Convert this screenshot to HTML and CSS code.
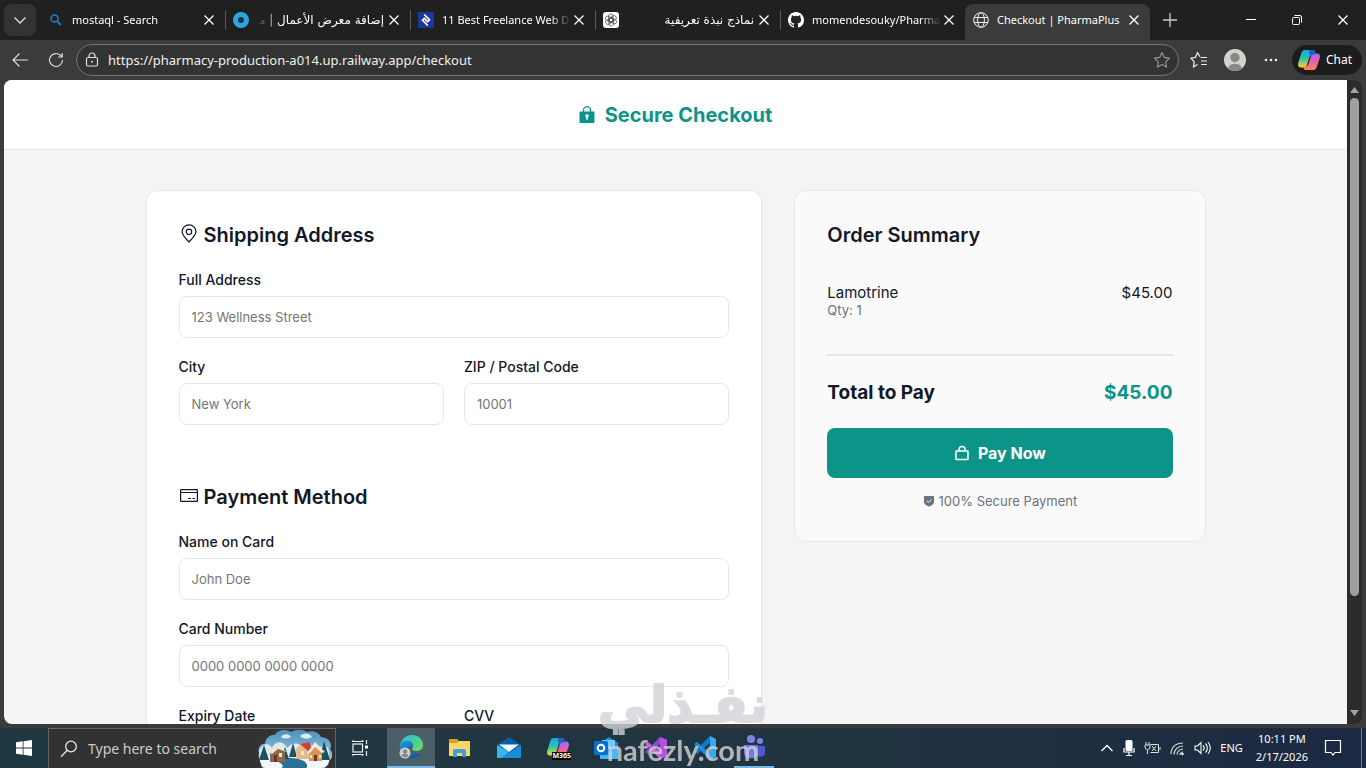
FILE: index.html
```html
<!DOCTYPE html>
<html lang="en">
<head>
<meta charset="utf-8">
<title>Checkout | PharmaPlus</title>
<link rel="stylesheet" href="styles.css">
</head>
<body>
<svg class="defs" aria-hidden="true">
  <defs>
    <linearGradient id="cpA" x1="0" y1="0" x2="0" y2="1"><stop offset="0" stop-color="#19a5f5"/><stop offset=".5" stop-color="#2fc6a0"/><stop offset="1" stop-color="#ffd02f"/></linearGradient>
    <linearGradient id="cpB" x1="0" y1="0" x2="0" y2="1"><stop offset="0" stop-color="#9a6bf5"/><stop offset=".5" stop-color="#ee5fa8"/><stop offset="1" stop-color="#ff8a4a"/></linearGradient>
    <linearGradient id="edgeA" x1="0" y1="0" x2="1" y2="1"><stop offset="0" stop-color="#2bb5ee"/><stop offset="1" stop-color="#6fe04a"/></linearGradient>
    <linearGradient id="edgeB" x1="0" y1="0" x2="1" y2="1"><stop offset="0" stop-color="#1b9de2"/><stop offset="1" stop-color="#0c4a9e"/></linearGradient>
    <linearGradient id="sky" x1="0" y1="0" x2="0" y2="1"><stop offset="0" stop-color="#4a90bd"/><stop offset="1" stop-color="#b7d8ea"/></linearGradient>
    <symbol id="x" viewBox="0 0 12 12"><path d="M1.5 1.5l9 9M10.500 1.500l-9 9" fill="none" stroke="currentColor" stroke-width="1.300"/></symbol>
    <symbol id="copilot" viewBox="0 0 24 24">
      <path d="M8 2h8c1 0 1.500.5 2 1.500l1 3h-3c-2 0-3 1-3.500 2.500L10 17c-.6 1.700-1.600 2.500-3.500 2.500H4C1.500 19.500.5 17.500 1.200 15L4.500 4.500C5 3 6 2 8 2z" fill="url(#cpA)"/>
      <path d="M16 22H8.500C7 22 6.500 20.500 6 18.500h2c2 0 3-1 3.500-2.500L14 8c.6-1.700 1.600-2.500 3.500-2.500H20c2.500 0 3.500 2 2.800 4.500L19.500 19.500C19 21 18 22 16 22z" fill="url(#cpB)"/>
      <path d="M12 2h4c1 0 1.500.5 2 1.500l1 3h-2.500c-1.800 0-2.600.8-3.200 2L12 5z" fill="#1b5fd0"/>
    </symbol>
  </defs>
</svg>

<div class="tabstrip">
  <button class="tabmenu" aria-label="Tab actions"><svg width="14" height="14" viewBox="0 0 14 14"><path d="M1.500 4.500L7 10l5.500-5.500" fill="none" stroke="#ddd" stroke-width="1.300"/></svg></button>
  <div class="tabs">
    <div class="tab">
      <svg class="fav" viewBox="0 0 16 16"><circle cx="6.500" cy="6.500" r="3.500" fill="none" stroke="#2678c0" stroke-width="1.600"/><path d="M9 9l4 4" stroke="#2678c0" stroke-width="1.800"/></svg>
      <span class="title">mostaql - Search</span>
      <button class="close" aria-label="Close tab"><svg><use href="#x"/></svg></button>
    </div>
    <div class="tab sep">
      <svg class="fav" viewBox="0 0 16 16"><circle cx="8" cy="8" r="5.500" fill="#173445" stroke="#2da5e0" stroke-width="5"/></svg>
      <span class="title rtl" dir="rtl" lang="ar">إضافة معرض الأعمال | مستقل</span>
      <button class="close" aria-label="Close tab"><svg><use href="#x"/></svg></button>
    </div>
    <div class="tab sep">
      <svg class="fav" viewBox="0 0 16 16"><path fill="#183a9e" d="M0 0h16v16H0z"/><path d="M6.200 2.500l5.300 5.300-2.300 2.400M9.800 13.500L4.500 8.200l2.300-2.400M6.200 6l3.600 4" fill="none" stroke="#fff" stroke-width="1.700"/></svg>
      <span class="title">11 Best Freelance Web D</span>
      <button class="close" aria-label="Close tab"><svg><use href="#x"/></svg></button>
    </div>
    <div class="tab sep">
      <svg class="fav" viewBox="0 0 16 16"><rect width="16" height="16" rx="3" fill="#fff"/><g fill="none" stroke="#444" stroke-width=".7"><rect x="5.500" y="2" width="4.500" height="8" rx="2.200"/><rect x="5.500" y="2" width="4.500" height="8" rx="2.200" transform="rotate(60 8 8)"/><rect x="5.500" y="2" width="4.500" height="8" rx="2.200" transform="rotate(120 8 8)"/><rect x="5.500" y="2" width="4.500" height="8" rx="2.200" transform="rotate(180 8 8)"/><rect x="5.500" y="2" width="4.500" height="8" rx="2.200" transform="rotate(240 8 8)"/><rect x="5.500" y="2" width="4.500" height="8" rx="2.200" transform="rotate(300 8 8)"/></g></svg>
      <span class="title rtl" dir="rtl" lang="ar">نماذج نبذة تعريفية</span>
      <button class="close" aria-label="Close tab"><svg><use href="#x"/></svg></button>
    </div>
    <div class="tab sep">
      <svg class="fav" viewBox="0 0 16 16"><path fill="#fff" d="M8 0C3.580 0 0 3.580 0 8c0 3.540 2.290 6.530 5.470 7.590.4.070.55-.17.55-.38 0-.19-.01-.82-.01-1.490-2.010.37-2.530-.49-2.690-.94-.09-.23-.48-.94-.82-1.130-.28-.15-.68-.52-.01-.53.63-.01 1.080.58 1.230.82.720 1.210 1.870.87 2.330.66.070-.52.280-.87.510-1.070-1.780-.2-3.640-.89-3.640-3.950 0-.87.310-1.590.82-2.150-.08-.2-.36-1.020.08-2.120 0 0 .67-.21 2.200.82a7.600 7.600 0 014 0c1.530-1.040 2.200-.82 2.200-.82.440 1.100.16 1.920.08 2.120.51.560.82 1.270.82 2.150 0 3.070-1.870 3.750-3.650 3.950.29.250.54.730.54 1.480 0 1.070-.01 1.930-.01 2.200 0 .21.150.46.55.38A8 8 0 0016 8c0-4.420-3.580-8-8-8z"/></svg>
      <span class="title">momendesouky/Pharma</span>
      <button class="close" aria-label="Close tab"><svg><use href="#x"/></svg></button>
    </div>
    <div class="tab active">
      <svg class="fav" viewBox="0 0 16 16"><g fill="none" stroke="#eee" stroke-width="1"><circle cx="8" cy="8" r="7.300"/><ellipse cx="8" cy="8" rx="3.400" ry="7.300"/><path d="M1.200 5.500h13.600M1.200 10.500h13.600"/></g></svg>
      <span class="title">Checkout | PharmaPlus</span>
      <button class="close" aria-label="Close tab"><svg><use href="#x"/></svg></button>
    </div>
    <button class="newtab" aria-label="New tab"><svg width="16" height="16" viewBox="0 0 16 16"><path d="M8 1v14M1 8h14" stroke="#ccc" stroke-width="1.300"/></svg></button>
  </div>
  <div class="wincontrols">
    <button aria-label="Minimize"><svg width="12" height="12" viewBox="0 0 12 12"><path d="M1 5.500h10" stroke="#fff"/></svg></button>
    <button aria-label="Restore"><svg width="12" height="12" viewBox="0 0 12 12"><g fill="none" stroke="#fff"><rect x="1.500" y="3.500" width="7" height="7" rx="1"/><path d="M3.500 1.500h5.500a1.500 1.500 0 011.500 1.500v5.500"/></g></svg></button>
    <button aria-label="Close"><svg width="12" height="12"><use href="#x"/></svg></button>
  </div>
</div>

<div class="toolbar">
  <button class="tool" aria-label="Back"><svg width="18" height="16" viewBox="0 0 18 16"><path d="M17 8H2M8.500 1.500L2 8l6.500 6.500" fill="none" stroke="#ddd" stroke-width="1.200"/></svg></button>
  <button class="tool" aria-label="Refresh"><svg width="16" height="16" viewBox="0 0 16 16"><path d="M14.500 8A6.500 6.500 0 1112.500 3.300L14 4.800M14.200 1v4h-4" fill="none" stroke="#ddd" stroke-width="1.200"/></svg></button>
  <div class="address">
    <svg width="14" height="16" viewBox="0 0 14 16"><g fill="none" stroke="#ddd" stroke-width="1.200"><rect x="1.500" y="5.500" width="11" height="8.500" rx="1.500"/><path d="M4 5.500V4a3 3 0 016 0v1.500"/></g><circle cx="7" cy="9.800" r="1" fill="#ddd"/></svg>
    <input type="text" aria-label="Address" value="https://pharmacy-production-a014.up.railway.app/checkout">
    <button aria-label="Add to favorites"><svg width="18" height="18" viewBox="0 0 18 18"><path d="M9 1.500l2.300 4.900 5.200.7-3.800 3.700.9 5.300L9 13.600l-4.600 2.500.9-5.300L1.500 7.100l5.200-.7z" fill="none" stroke="#999" stroke-width="1.100" stroke-linejoin="round"/></svg></button>
  </div>
  <button class="tool" aria-label="Favorites"><svg width="18" height="18" viewBox="0 0 18 18"><path d="M10 5.800L7.500 1.500 5.400 6.400.9 7.100l3.300 3.700-.8 5.300L7.500 13.600M10.500 6.500H17M11 10h6M11 13.500h6" fill="none" stroke="#eee" stroke-width="1.200" stroke-linejoin="round"/></svg></button>
  <button class="tool" aria-label="Profile"><svg width="22" height="22" viewBox="0 0 22 22"><circle cx="11" cy="11" r="11" fill="#d4d2cf"/><circle cx="11" cy="8.500" r="4.700" fill="#8b8986"/><path d="M4 19.500c.5-3 3-4.700 7-4.700s6.500 1.700 7 4.700a11 11 0 01-14 0z" fill="#8b8986"/></svg></button>
  <button class="tool" aria-label="Settings and more"><svg width="14" height="4" viewBox="0 0 14 4"><g fill="#eee"><circle cx="2" cy="2" r="1.300"/><circle cx="7" cy="2" r="1.300"/><circle cx="12" cy="2" r="1.300"/></g></svg></button>
  <button class="chat"><svg width="24" height="24"><use href="#copilot"/></svg>Chat</button>
</div>

<div class="viewport">
  <div class="page">
    <header class="site-header">
      <svg width="16" height="18" viewBox="0 0 16 18"><path d="M4.500 6V4.200a3.500 3.500 0 017 0V6" fill="none" stroke="#0d9488" stroke-width="1.300"/><path fill="#0d9488" fill-rule="evenodd" d="M1.500 5.500h13a1 1 0 011 1V16a1 1 0 01-1 1h-13a1 1 0 01-1-1V6.500a1 1 0 011-1zM8 8.200a1.800 1.800 0 00-.8 3.400v2.200h1.600v-2.200A1.800 1.800 0 008 8.200z"/></svg>
      <h1>Secure Checkout</h1>
    </header>
    <main class="checkout">
      <form class="card details">
        <section>
          <h2><svg width="20" height="22" viewBox="0 0 20 22"><g fill="none" stroke="#111827" stroke-width="1.200"><path d="M10 18C6 14 3.100 11 3.100 7.800a6.900 6.900 0 0113.800 0c0 3.200-2.900 6.200-6.900 10.200z"/><circle cx="10" cy="7.800" r="2.700"/></g></svg>Shipping Address</h2>
          <div class="field"><label for="addr">Full Address</label><input id="addr" type="text" placeholder="123 Wellness Street"></div>
          <div class="pair">
            <div class="field"><label for="city">City</label><input id="city" type="text" placeholder="New York"></div>
            <div class="field"><label for="zip">ZIP / Postal Code</label><input id="zip" type="text" placeholder="10001"></div>
          </div>
        </section>
        <section>
          <h2><svg width="20" height="22" viewBox="0 0 20 22"><g fill="none" stroke="#111827" stroke-width="1.200"><rect x="1.600" y="3.600" width="16.800" height="11.800" rx=".5"/><path d="M1.500 6.500h17M9 12.500h3M13.500 12.500h2.500"/></g></svg>Payment Method</h2>
          <div class="field"><label for="name">Name on Card</label><input id="name" type="text" placeholder="John Doe"></div>
          <div class="field"><label for="card">Card Number</label><input id="card" type="text" placeholder="0000 0000 0000 0000"></div>
          <div class="pair">
            <div class="field"><label for="exp">Expiry Date</label><input id="exp" type="text" placeholder="MM/YY"></div>
            <div class="field"><label for="cvv">CVV</label><input id="cvv" type="text" placeholder="123"></div>
          </div>
        </section>
      </form>
      <aside class="card summary">
        <h2>Order Summary</h2>
        <div class="item">
          <div><div>Lamotrine</div><div class="qty">Qty: 1</div></div>
          <div>$45.00</div>
        </div>
        <div class="total"><span>Total to Pay</span><span class="amount">$45.00</span></div>
        <button class="pay"><svg width="16" height="16" viewBox="0 0 16 16"><g fill="none" stroke="#fff" stroke-width="1.500"><rect x="2" y="6" width="12" height="8.500" rx=".5"/><path d="M5 6V4.500a3 3 0 016 0V6"/></g></svg>Pay Now</button>
        <p class="secure"><svg width="12" height="12" viewBox="0 0 12 12"><path d="M1 1h10v5.500C11 9 8.500 11 6 11.500 3.500 11 1 9 1 6.500z" fill="#6b7280"/><path d="M3.700 5.800l1.700 1.700 3-3" fill="none" stroke="#fafafa"/></svg>100% Secure Payment</p>
      </aside>
    </main>
  </div>
  <div class="scrollbar">
    <svg width="9" height="6" viewBox="0 0 9 6"><path d="M4.500 0L9 6H0z" fill="#a5a5a5"/></svg>
    <div class="track"><div class="thumb"></div></div>
    <svg width="9" height="6" viewBox="0 0 9 6"><path d="M4.500 6L0 0h9z" fill="#a5a5a5"/></svg>
  </div>
</div>

<footer class="taskbar">
  <button class="start" aria-label="Start"><svg width="16" height="16" viewBox="0 0 16 16"><path d="M0 2.200L6.700 1.300v6.300H0zM7.500 1.200L16 0v7.600H7.500zM0 8.400h6.700v6.300L0 13.800zM7.500 8.400H16V16l-8.500-1.200z" fill="#fff"/></svg></button>
  <div class="search">
    <svg width="18" height="18" viewBox="0 0 18 18"><circle cx="11" cy="6.500" r="5.300" fill="none" stroke="#e5e5e5" stroke-width="1.300"/><path d="M7.200 10.300L1 16.800" stroke="#e5e5e5" stroke-width="1.300"/></svg>
    <input type="text" aria-label="Search" placeholder="Type here to search">
    <svg width="74" height="40" viewBox="0 0 74 40">
      <path d="M1 24c-2-6 3-10 6-9 0-6 6-10 10-9 3-6 12-6 16-3 5-3 12-3 16 0 7-2 12 1 14 5 7 0 12 6 9 12 4 5 2 10-1 12 0 5-5 8-9 8H10c-7 0-8-5-6-8-3-1-4-5-3-8z" fill="url(#sky)"/>
      <path d="M1 22c5-10 11-7 13-3 4-8 12-7 15 0 6-7 14-5 16 1 6-6 12-4 15 0 5-6 11-3 11 3v10H2z" fill="#d9eaf3"/>
      <path d="M42 7c4-4 10-3 12 1-5 3-9 2-12-1zM23 8c3-4 8-3 10 0-4 2-7 2-10 0z" fill="#dcecf4"/>
      <path d="M2 30c8-5 16-3 22-1 8 3 14-3 24-1 10-2 18-1 23 3 0 5-5 8-9 8H10c-6 0-8-4-8-9z" fill="#f1f7fa"/>
      <path d="M18 32c8-4 20-4 28 0 3 2 4 5 2 8H22c5-3 3-5-4-8z" fill="#2d6f96"/>
      <path d="M6 16l-5 15h10zM27 18l-4 12h8zM35 14l-4 14h8zM66 12l-5 19h11z" fill="#1c5361"/>
      <path d="M12 22l6-6 9 6v11H12z" fill="#8e6550"/><path d="M10 23l8-8 3 2 8 6-9-3-6 5z" fill="#eee3d5"/>
      <path d="M38 20l6-6 8 7v9H38z" fill="#e5b98d"/><path d="M42 15l9-2 4 8-5 1z" fill="#ca4434"/>
      <path d="M51 23l6-8 7 8v9H51z" fill="#d99357"/><path d="M49 24l8-11 10 10-3 1-7-6-6 7z" fill="#f4e9dc"/>
      <path d="M16 26h3v7h-3zM56 26h3v6h-3z" fill="#6d3521"/><path d="M21 24h3v4h-3zM43 22h3v4h-3zM52 26h2v3h-2zM61 26h2v3h-2z" fill="#ffe9a0"/>
    </svg>
  </div>
  <button class="task" aria-label="Task view"><svg width="18" height="18" viewBox="0 0 18 18"><g fill="none" stroke="#eee" stroke-width="1.200"><rect x="2" y="5" width="9.500" height="8"/><path d="M1 2.500h11.500M1 15.500h11.500M15.500 1v4M15.500 12v5M2 2.500V1M11.500 2.500V1M2 15.500V17M11.500 15.500V17"/></g><path d="M14 6.500h3v3h-3z" fill="#fff"/></svg></button>
  <div class="apps">
    <button class="task current" aria-label="Microsoft Edge"><svg width="26" height="26" viewBox="0 0 26 26"><path d="M2 12C3 4 9 1 14 1c7 0 11 5 11 10 0 4-3 6-7 6-3 0-4-1-4-2 0-1 1-1 1-3 0-3-3-5-6-5-4 0-6 3-7 5z" fill="url(#edgeA)"/><path d="M2 12c1-3 4-5 7-5 4 0 6 2 6 5-1-1-5 0-5 4 0 4 5 6 12 3-2 4-6 6-10 5C5 23 1 18 2 12z" fill="url(#edgeB)"/><circle cx="7" cy="19" r="5.500" fill="#cfcfcf"/><circle cx="7" cy="17.500" r="2.200" fill="#888"/><path d="M3.500 22c.7-3 6.300-3 7 0a5 5 0 01-7 0z" fill="#888"/></svg></button>
    <button class="task" aria-label="File Explorer"><svg width="24" height="22" viewBox="0 0 24 22"><path d="M1 2h8l2 2h11v15H1z" fill="#d9a02b"/><path d="M1 6h8l2-2h11v15H1z" fill="#fbd767"/><path d="M5 20v-6a2 2 0 012-2h9a2 2 0 012 2v6h-4v-4H9v4z" fill="#3f9fd8"/></svg></button>
    <button class="task" aria-label="Mail"><svg width="26" height="24" viewBox="0 0 26 24"><path d="M1 9L13 1l12 8v13H1z" fill="#0b5cab"/><path d="M3 8.500h20L13 16z" fill="#f4fbff"/><path d="M1 9l12 7-7 6H1z" fill="#38b5ec"/><path d="M25 9v13H5z" fill="#168dd8"/></svg></button>
    <button class="task m365" aria-label="Microsoft 365"><svg width="26" height="24"><use href="#copilot"/></svg><span>M365</span></button>
    <button class="task" aria-label="Outlook"><svg width="26" height="24" viewBox="0 0 26 24"><path d="M6 7l9-6 9 6v14H6z" fill="#1a8ee0"/><path d="M8 4h13v9H8z" fill="#72caff"/><path d="M6 11l9 6 9-6v12H6z" fill="#45b8f5"/><rect y="5" width="14" height="14" rx="1.500" fill="#0b6fd0"/><circle cx="7" cy="12" r="3.300" fill="none" stroke="#fff" stroke-width="2"/></svg></button>
    <button class="task" aria-label="Visual Studio"><svg width="26" height="26" viewBox="0 0 26 26"><path d="M17 2l7 3v16l-7 3L2 9l3-2 12 10z" fill="#d75be0"/><path d="M17 2v7L5 19l-3-2z" fill="#8e48cc"/><path d="M17 2l7 3v16l-7 3z" fill="#b650e0"/></svg></button>
    <button class="task" aria-label="Visual Studio Code"><svg width="26" height="26" viewBox="0 0 26 26"><path d="M18 1v7L5 19l-3-2z" fill="#1479c5"/><path d="M18 25v-7L5 7 2 9z" fill="#1b8edb"/><path d="M18 1l6 3v18l-6 3z" fill="#39a9f2"/></svg></button>
    <button class="task open" aria-label="Teams"><svg width="26" height="26" viewBox="0 0 26 26"><circle cx="10" cy="5" r="4" fill="#7b83eb"/><circle cx="19" cy="7" r="3" fill="#7b83eb"/><path d="M15 12h9v7c0 4-6 5-9 2z" fill="#5059c9"/><path d="M3 11h14v8c0 7-14 7-14 0z" fill="#7579e6"/></svg></button>
  </div>
  <div class="tray">
    <svg width="14" height="10" viewBox="0 0 14 10"><path d="M1.500 8L7 2.500 12.500 8" fill="none" stroke="#fff" stroke-width="1.300"/></svg>
    <svg width="12" height="16" viewBox="0 0 12 16"><rect x="2.500" y="0" width="7" height="11" rx="1.500" fill="#fff"/><path d="M1 8v4h10V8M6 12v3M3 15.500h6" fill="none" stroke="#fff" stroke-width="1.200"/></svg>
    <svg width="17" height="14" viewBox="0 0 17 14"><g fill="none" stroke="#ddd"><path d="M6.500 3.500h8v8h-8M16 6v3M2 1v3M5 1v3M1 4h5v2a2.500 2.500 0 01-5 0zM3.500 9v4M8 5l4 5M12 5l-4 5"/></g></svg>
    <svg width="15" height="15" viewBox="0 0 15 15"><g fill="none" stroke="#ddd" stroke-width="1.200"><path d="M1 13C1 6 6 2 13 2M4 13.500c0-5 4-8.500 9-8.500M7 13.500C7 10.500 10 8 13 8M10 14c0-1.500 1.500-3 3-3"/></g><circle cx="12.500" cy="13" r="1.200" fill="#fff"/></svg>
    <svg width="17" height="14" viewBox="0 0 17 14"><g fill="none" stroke="#fff" stroke-width="1.100"><path d="M1 5h2.500L7 1.500v11L3.500 9H1zM9 4.500c1.500 1.500 1.500 3.500 0 5M11.500 2.500c2.500 2.500 2.500 6.500 0 9M14 1c3 3.500 3 8.500 0 12"/></g></svg>
    <span class="lang">ENG</span>
    <div class="clock"><span>10:11 PM</span><span>2/17/2026</span></div>
    <svg width="18" height="18" viewBox="0 0 18 18"><path d="M1.500 1.500h15v12H11l-2 2.500-2-2.500H1.500z" fill="none" stroke="#fff" stroke-width="1.200"/></svg>
  </div>
  <div class="desktop-edge"></div>
</footer>

<div class="watermark" aria-hidden="true"><span class="wm-ar" dir="rtl" lang="ar">نفـذلي</span><span class="wm-en">nafezly.com</span></div>
</body>
</html>
```
FILE: styles.css
```css
* { box-sizing: border-box; }
body {
  margin: 0; height: 100vh; overflow: hidden;
  display: flex; flex-direction: column;
  background: #3b3b3b; color: #fff;
  font: 12px/16px "Noto Sans", "DejaVu Sans", sans-serif;
}
button { border: 0; padding: 0; background: none; color: inherit; font: inherit; display: flex; align-items: center; justify-content: center; }
input { min-width: 0; font: inherit; color: inherit; border: 0; background: none; padding: 0; outline: 0; }
svg { flex: none; display: block; }
.defs { position: absolute; width: 0; height: 0; }

.tabstrip { flex: none; height: 40px; background: #202020; display: flex; padding: 4px 0 0 4px; }
.tabmenu { width: 32px; height: 32px; border-radius: 8px; background: #333; margin-right: 4px; }
.tabs { flex: 1; display: flex; min-width: 0; }
.tab { position: relative; flex: 0 1 185px; min-width: 0; height: 36px; padding: 0 10px 4px 8px; display: flex; align-items: center; gap: 8px; }
.tab.sep::before { content: ""; position: absolute; left: 0; top: 6px; height: 20px; width: 1px; background: #5c5c5c; }
.tab.active { background: #3b3b3b; border-radius: 8px 8px 0 0; }
.fav { width: 16px; height: 16px; }
.title { flex: 1; min-width: 0; margin-right: -6px; overflow: hidden; white-space: nowrap; font-size: 11px; mask-image: linear-gradient(to right, #000 84%, transparent); }
.title.rtl { font-family: "DejaVu Sans", sans-serif; font-size: 12px; margin-right: -4px; mask-image: linear-gradient(to left, #000 82%, transparent); }
.active .title { mask-image: none; }
.close { width: 12px; height: 12px; }
.close svg { width: 12px; height: 12px; }
.newtab { width: 40px; height: 32px; }
.wincontrols { display: flex; height: 32px; }
.wincontrols button { width: 46px; }

.toolbar { flex: none; height: 40px; display: flex; align-items: center; padding: 0 4px 0 2px; }
.tool { width: 36px; height: 32px; }
.address { flex: 1; height: 32px; display: flex; align-items: center; gap: 9px; margin: 0 2px; padding: 0 7px 0 8px; border: 1px solid #757575; border-radius: 16px; background: #333; }
.address input { flex: 1; font-size: 13px; line-height: 18px; color: #f0f0f0; }
.chat { height: 30px; padding: 0 10px 0 5px; gap: 5px; border-radius: 15px; background: #1c1c1c; margin-left: 3px; }

.viewport { flex: 1; min-height: 0; display: flex; margin: 0 4px 4px; border-radius: 8px; overflow: hidden; }
.page { flex: 1; min-width: 0; overflow: hidden; background: #f3f4f6; color: #111827; font-family: Inter, sans-serif; }
.scrollbar { width: 15px; background: #2c2c2c; display: flex; flex-direction: column; align-items: center; padding: 7px 0 8px; gap: 5px; }
.track { flex: 1; width: 9px; }
.thumb { height: 82%; border-radius: 5px; background: #a0a0a0; }
.site-header { height: 70px; background: #fff; border-bottom: 1px solid #e5e7eb; display: flex; align-items: center; justify-content: center; gap: 10px; color: #0d9488; }
h1, h2 { margin: 0; font-size: 20px; line-height: 24px; }
h1 { font-weight: 700; }
h2 { display: flex; align-items: center; gap: 5px; font-weight: 600; margin-bottom: 24px; }
.checkout { max-width: 1100px; margin: 0 auto; padding: 40px 20px; display: grid; grid-template-columns: 3fr 2fr; gap: 32px; align-items: start; }
.card { border: 1px solid #e5e7eb; border-radius: 12px; padding: 32px; background: #fff; }
.details section { margin-bottom: 40px; }
.field { display: flex; flex-direction: column; gap: 7px; margin-bottom: 20px; }
.field label { font-size: 14px; line-height: 18px; font-weight: 500; }
.field input { height: 42px; padding: 0 12px; border: 1px solid #e5e7eb; border-radius: 8px; font-size: 13px; background: #fff; }
.field input::placeholder { color: #757575; }
.pair { display: grid; grid-template-columns: 1fr 1fr; gap: 20px; }
.summary { background: #fafafa; }
.item { display: flex; justify-content: space-between; margin-top: 37px; padding-bottom: 36px; border-bottom: 2px solid #e5e7eb; font-size: 15px; line-height: 18px; }
.qty { font-size: 13px; line-height: 16px; color: #6b7280; }
.total { display: flex; justify-content: space-between; margin: 25px 0 23px; font-size: 19px; line-height: 24px; font-weight: 700; }
.amount { color: #0d9488; }
.pay { width: 100%; height: 50px; border-radius: 8px; background: #0d9488; color: #fff; gap: 8px; font-size: 16px; font-weight: 700; }
.secure { margin: 15px 0 0; display: flex; align-items: center; justify-content: center; gap: 4px; font-size: 13px; line-height: 16px; color: #6b7280; }

.taskbar { flex: none; height: 40px; display: flex; background: linear-gradient(to right, #1f3740, #213541 60%, #1c2842); }
.start, .task { width: 48px; height: 40px; }
.search { width: 288px; display: flex; align-items: center; gap: 10px; padding: 0 3px 0 11px; border: 1px solid #666; border-width: 1px 1px 0; background: #323232; }
.search input { flex: 1; font-size: 14px; line-height: 20px; }
.search input::placeholder { color: #ccc; opacity: 1; }
.apps { display: flex; gap: 1px; margin-left: 3px; }
.current { background: #4b5f66; border-bottom: 2px solid #76b9ed; }
.task.open { width: 40px; margin: 0 4px; border-bottom: 2px solid #76b9ed; }
.m365 { position: relative; }
.m365 span { position: absolute; right: 11px; bottom: 8px; background: #000; font-size: 7px; line-height: 8px; font-weight: 700; }
.tray { margin-left: auto; display: flex; align-items: center; gap: 9px; font-size: 11px; }
.clock { display: flex; flex-direction: column; align-items: center; line-height: 18px; margin: 0 7px 0 4px; }
.desktop-edge { width: 1px; background: #77808f; margin: 0 4px 0 19px; }

.watermark { position: fixed; left: 50%; bottom: 0; height: 90px; transform: translateX(-50%); color: #d2d4d7; opacity: .8; display: flex; flex-direction: column; align-items: center; pointer-events: none; }
.wm-ar { font: 700 50px/54px "DejaVu Sans", sans-serif; -webkit-text-stroke: 2px #d2d4d7; }
.wm-en { font: 700 29px/36px Lato, sans-serif; }
```
